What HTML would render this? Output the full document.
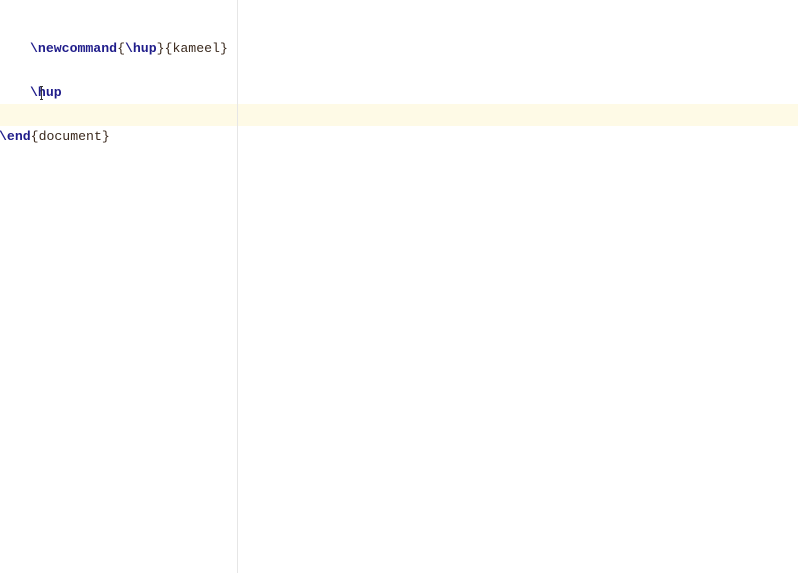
<!DOCTYPE html>
<html><head><style>
html,body{margin:0;padding:0;width:798px;height:573px;background:#fff;overflow:hidden;position:relative;font-family:"Liberation Mono",monospace;font-size:13.2px;}
.l{position:absolute;left:0;white-space:pre;line-height:22px;color:#3b2a1e;}
.k{color:#1f1c8a;font-weight:bold;}
.hl{position:absolute;left:0;top:104px;width:798px;height:22px;background:#fefae6;}
.div{position:absolute;left:237px;top:0;width:1px;height:573px;background:#e6e6e6;}
.cur{position:absolute;left:40px;top:86px;width:3px;height:14px;border-top:1px solid #333;border-bottom:1px solid #333;box-sizing:border-box;}
.cur:after{content:"";position:absolute;left:1px;top:0;width:1px;height:12px;background:#333;}
</style></head><body>
<div class="hl"></div>
<div class="div"></div>
<div class="l" style="top:38px;left:30px"><span class="k">\newcommand</span>{<span class="k">\hup</span>}{kameel}</div>
<div class="l" style="top:82px;left:30px"><span class="k">\hup</span></div>
<div class="cur"></div>
<div class="l" style="top:126px;left:-1px"><span class="k">\end</span>{document}</div>
</body></html>
